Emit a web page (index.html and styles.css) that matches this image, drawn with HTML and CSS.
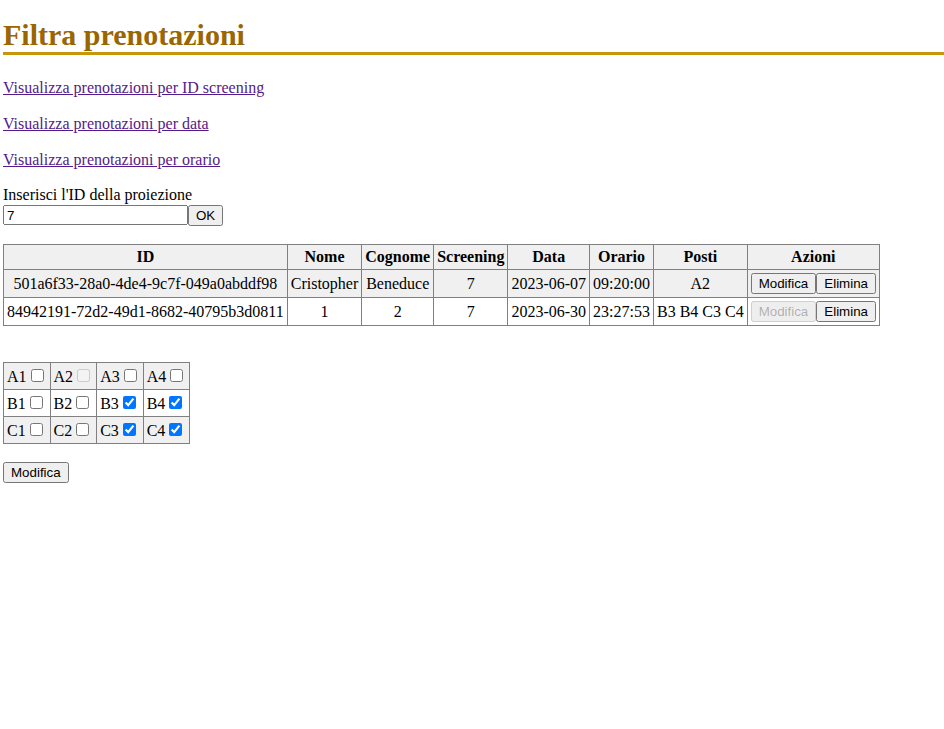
FILE: index.html
```html
<!DOCTYPE html>
<html lang="it">
<head>
<meta charset="utf-8">
<title>Filtra prenotazioni</title>
<link rel="stylesheet" href="styles.css">
</head>
<body>
<h1 class="title">Filtra prenotazioni</h1>
<p class="nav"><a href="#">Visualizza prenotazioni per ID screening</a></p>
<p class="nav"><a href="#">Visualizza prenotazioni per data</a></p>
<p class="nav"><a href="#">Visualizza prenotazioni per orario</a></p>
<form class="filter">
  <label class="filter-label" for="pid">Inserisci l'ID della proiezione</label>
  <div class="filter-row"><input id="pid" class="filter-input" type="text" value="7"><button type="button" class="btn">OK</button></div>
</form>
<table class="grid bookings">
  <thead>
    <tr><th>ID</th><th>Nome</th><th>Cognome</th><th>Screening</th><th>Data</th><th>Orario</th><th>Posti</th><th>Azioni</th></tr>
  </thead>
  <tbody>
    <tr><td>501a6f33-28a0-4de4-9c7f-049a0abddf98</td><td>Cristopher</td><td>Beneduce</td><td>7</td><td>2023-06-07</td><td>09:20:00</td><td>A2</td><td class="actions"><button type="button" class="btn">Modifica</button><button type="button" class="btn">Elimina</button></td></tr>
    <tr><td>84942191-72d2-49d1-8682-40795b3d0811</td><td>1</td><td>2</td><td>7</td><td>2023-06-30</td><td>23:27:53</td><td>B3 B4 C3 C4</td><td class="actions"><button type="button" class="btn" disabled>Modifica</button><button type="button" class="btn">Elimina</button></td></tr>
  </tbody>
</table>
<table class="grid seats">
  <tbody>
    <tr><td>A1<input type="checkbox"></td><td>A2<input type="checkbox" disabled></td><td>A3<input type="checkbox"></td><td>A4<input type="checkbox"></td></tr>
    <tr><td>B1<input type="checkbox"></td><td>B2<input type="checkbox"></td><td>B3<input type="checkbox" checked></td><td>B4<input type="checkbox" checked></td></tr>
    <tr><td>C1<input type="checkbox"></td><td>C2<input type="checkbox"></td><td>C3<input type="checkbox" checked></td><td>C4<input type="checkbox" checked></td></tr>
  </tbody>
</table>
<div class="submit-row"><button type="button" class="btn">Modifica</button></div>
</body>
</html>
```
FILE: styles.css
```css
body {
  margin: 3px 0 3px 3px;
  font-family: "Liberation Serif", "Times New Roman", serif;
  font-size: 16px;
  color: #000;
}
.title {
  margin: 15px 0 23px;
  font-size: 30px;
  font-weight: bold;
  color: #996600;
  border-bottom: 3px solid #c8960a;
}
.nav {
  margin: 16px 0;
  line-height: 20px;
}
.nav a {
  color: #551a8b;
}
.filter {
  margin: 16px 0 18px;
}
.filter-label {
  display: block;
}
.filter-row {
  display: flex;
  margin-top: 1px;
}
.filter-input {
  box-sizing: border-box;
  width: 185px;
  height: 20px;
  font-family: "Liberation Sans", Arial, sans-serif;
  font-size: 13.33px;
  margin: 0;
}
.btn {
  font-family: "Liberation Sans", Arial, sans-serif;
  font-size: 13.33px;
  margin: 0;
}
.grid {
  border-collapse: collapse;
}
.grid th,
.grid td {
  border: 1px solid gray;
  padding: 3px;
}
.bookings td {
  text-align: center;
}
.grid thead tr,
.grid tbody tr:nth-child(odd) {
  background: #f0f0f0;
}
.grid tbody tr:nth-child(even) {
  background: #fff;
}
.seats {
  margin-top: 36px;
}
.submit-row {
  margin-top: 18px;
}
```
